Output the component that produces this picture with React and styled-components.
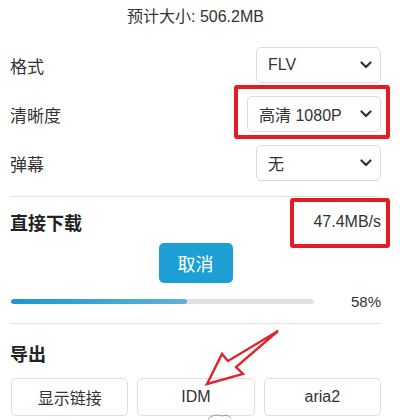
import React from 'react'
import styled, { createGlobalStyle } from 'styled-components'

const GlobalStyle = createGlobalStyle`
  body {
    margin: 0;
    background: #fff;
    color: #333;
    font-family: "Liberation Sans", Arial, "Noto Sans CJK SC", sans-serif;
  }
`

const Panel = styled.div`
  position: relative;
  width: 400px;
  height: 420px;
  overflow: hidden;
  box-sizing: border-box;
  padding: 0 19px 0 10px;
`

const Title = styled.div`
  height: 34px;
  line-height: 34px;
  text-align: center;
  font-size: 16px;
  color: #333;
`

const Fields = styled.div`
  display: flex;
  flex-direction: column;
  gap: 13px;
  margin-top: 13px;
`

const Row = styled.div`
  display: flex;
  align-items: center;
  justify-content: space-between;
  height: 36px;
`

const Label = styled.span`
  font-size: 17px;
  color: #333;
`

const SelectWrap = styled.div`
  position: relative;
`

const SelectBox = styled.div`
  display: flex;
  align-items: center;
  justify-content: space-between;
  box-sizing: border-box;
  width: ${p => p.$w}px;
  height: 36px;
  padding: 0 8px 0 11px;
  border: 1px solid #dcdcdc;
  border-radius: 5px;
  background: #fff;
  font-size: 16px;
  color: #333;
`

const Mark = styled.div`
  position: absolute;
  top: ${p => p.$t}px;
  right: ${p => p.$r}px;
  bottom: ${p => p.$b}px;
  left: ${p => p.$l}px;
  border: 4px solid #e21c24;
  border-radius: 3px;
  pointer-events: none;
`

const Divider = styled.hr`
  border: 0;
  border-top: 1px solid #e2e2e2;
  margin: ${p => p.$m};
`

const SectionHead = styled.div`
  display: flex;
  align-items: center;
  justify-content: space-between;
  height: 24px;
  margin-top: ${p => p.$mt}px;
`

const Heading = styled.span`
  font-size: 18px;
  font-weight: bold;
  color: #222;
`

const Speed = styled.span`
  position: relative;
  font-size: 16px;
  color: #333;
`

const CancelRow = styled.div`
  display: flex;
  justify-content: center;
  margin-top: 9px;
`

const CancelButton = styled.button`
  width: 74px;
  height: 40px;
  border: 0;
  border-radius: 5px;
  background: #1b9fd5;
  color: #fff;
  font-size: 18px;
  font-family: inherit;
`

const ProgressRow = styled.div`
  display: flex;
  align-items: center;
  justify-content: space-between;
  height: 20px;
  margin-top: 8px;
`

const Track = styled.div`
  width: 303px;
  height: 5px;
  margin-left: 1px;
  border-radius: 3px;
  background: #e1e1e1;
  overflow: hidden;
`

const Fill = styled.div`
  height: 100%;
  border-radius: 3px;
  background: linear-gradient(90deg, #1c98cd, #5fb1d9);
`

const Percent = styled.span`
  font-size: 15px;
  color: #333;
`

const ButtonGrid = styled.div`
  display: grid;
  grid-template-columns: repeat(3, 1fr);
  gap: 9px;
  margin-top: 13px;
  padding-left: 1px;
`

const ExportButton = styled.button`
  height: 38px;
  border: 1px solid #dedede;
  border-radius: 5px;
  background: #fff;
  color: #333;
  font-size: 16px;
  font-family: inherit;
`

const Chevron = () => (
  <svg width="12" height="8" viewBox="0 0 12 8">
    <path d="M1.5 1.5 L6 6 L10.5 1.5" fill="none" stroke="#333" strokeWidth="2.2" strokeLinecap="round" strokeLinejoin="round" />
  </svg>
)

const Select = ({ value, width, children }) => (
  <SelectWrap>
    <SelectBox $w={width}>
      <span>{value}</span>
      <Chevron />
    </SelectBox>
    {children}
  </SelectWrap>
)

const Arrow = styled.svg`
  position: absolute;
  left: 0;
  top: 0;
  pointer-events: none;
`

const App = () => {
  const progress = 58
  return (
    <Panel>
      <GlobalStyle />
      <Title>预计大小: 506.2MB</Title>

      <Fields>
        <Row>
          <Label>格式</Label>
          <Select value="FLV" width={125} />
        </Row>
        <Row>
          <Label>清晰度</Label>
          <Select value="高清 1080P" width={134}>
            <Mark $t={-11} $r={-9} $b={-7} $l={-13} />
          </Select>
        </Row>
        <Row>
          <Label>弹幕</Label>
          <Select value="无" width={125} />
        </Row>
      </Fields>

      <Divider $m="15px 0 0" />

      <SectionHead $mt={13}>
        <Heading>直接下载</Heading>
        <Speed>
          47.4MB/s
          <Mark $t={-15} $r={-9} $b={-17} $l={-23} />
        </Speed>
      </SectionHead>

      <CancelRow>
        <CancelButton>取消</CancelButton>
      </CancelRow>

      <ProgressRow>
        <Track>
          <Fill style={{ width: `${progress}%` }} />
        </Track>
        <Percent>{progress}%</Percent>
      </ProgressRow>

      <Divider $m="12px 0 0" />

      <SectionHead $mt={17}>
        <Heading>导出</Heading>
      </SectionHead>

      <ButtonGrid>
        <ExportButton>显示链接</ExportButton>
        <ExportButton>IDM</ExportButton>
        <ExportButton>aria2</ExportButton>
      </ButtonGrid>

      <Arrow width="400" height="420" viewBox="0 0 400 420">
        <path
          d="M207 384 L222 354 L228 361 L278 331 L236 367 L243 374 Z"
          fill="none"
          stroke="#e0262c"
          strokeWidth="2.4"
          strokeLinejoin="miter"
        />
        <path d="M208 419 Q214 413 222 416 Q228 414 231 418" fill="none" stroke="#999" strokeWidth="1" />
      </Arrow>
    </Panel>
  )
}

export default App
